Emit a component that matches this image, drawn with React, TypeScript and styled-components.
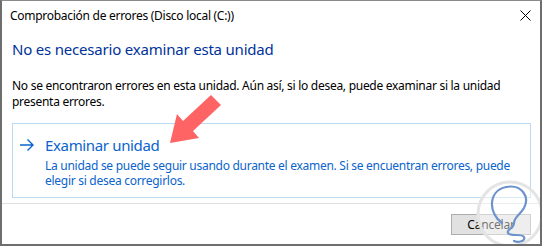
import React from "react";
import styled, { createGlobalStyle } from "styled-components";

const Global = createGlobalStyle`
  html, body { margin: 0; padding: 0; background: #fff; }
  body { font-family: "Segoe UI", "Noto Sans", "Liberation Sans", sans-serif; }
`;

const Window = styled.div`
  position: relative;
  width: 542px;
  height: 246px;
  box-sizing: border-box;
  border: 2px solid #6e6e6e;
  border-top: 1px solid #8a8a8a;
  background: #fff;
  display: flex;
  flex-direction: column;
  overflow: hidden;
`;

const TitleBar = styled.div`
  height: 29px;
  flex: none;
  display: flex;
  align-items: center;
  justify-content: space-between;
  padding: 0 8px 0 8px;
  font-size: 12px;
  letter-spacing: -0.28px;
  color: #000;
`;

const CloseBtn = styled.div`
  width: 11px;
  height: 11px;
  margin-right: 1px;
  display: flex;
`;

const Body = styled.div`
  flex: 1;
  display: flex;
  flex-direction: column;
  padding: 0 9px 0 10px;
`;

const Heading = styled.div`
  margin-top: 9px;
  font-size: 15px;
  line-height: 20px;
  letter-spacing: -0.2px;
  color: #003399;
`;

const Paragraph = styled.div`
  margin-top: 19px;
  font-size: 12px;
  line-height: 16px;
  letter-spacing: -0.28px;
  color: #000;
  width: 490px;
`;

const CommandLink = styled.div`
  margin-top: 13px;
  border: 1px solid #bcdaf2;
  padding: 11px 10px 9px 7px;
  display: grid;
  grid-template-columns: 25px 1fr;
`;

const LinkArrow = styled.div`
  display: flex;
  align-items: center;
  height: 20px;
`;

const LinkTitle = styled.div`
  font-size: 15px;
  line-height: 20px;
  letter-spacing: -0.35px;
  color: #0a64cc;
`;

const LinkDesc = styled.div`
  grid-column: 2;
  margin-top: 3px;
  font-size: 12px;
  line-height: 15px;
  letter-spacing: -0.28px;
  color: #0a64cc;
`;

const Footer = styled.div`
  margin-top: auto;
  height: 41px;
  border-top: 1px solid #dfdfdf;
  display: flex;
  justify-content: flex-end;
  align-items: flex-start;
  padding: 10px 9px 0 0;
  box-sizing: border-box;
  margin-left: -10px;
  margin-right: -9px;
`;

const Button = styled.button`
  width: 80px;
  height: 21px;
  border: 1px solid #adadad;
  background: #e1e1e1;
  font-family: inherit;
  font-size: 12px;
  letter-spacing: -0.2px;
  color: #000;
  padding: 0;
`;

const Overlay = styled.svg`
  position: absolute;
  left: 0;
  top: 0;
  pointer-events: none;
`;

export default function App() {
  return (
    <>
      <Global />
      <Window>
        <TitleBar>
          <span>Comprobación de errores (Disco local (C:))</span>
          <CloseBtn>
            <svg width="11" height="11" viewBox="0 0 11 11">
              <path d="M0.5 0.5 L10.5 10.5 M10.5 0.5 L0.5 10.5" stroke="#000" strokeWidth="1" />
            </svg>
          </CloseBtn>
        </TitleBar>
        <Body>
          <Heading>No es necesario examinar esta unidad</Heading>
          <Paragraph>
            No se encontraron errores en esta unidad. Aún así, si lo desea, puede examinar si la unidad
            presenta errores.
          </Paragraph>
          <CommandLink>
            <LinkArrow>
              <svg width="14" height="12" viewBox="0 0 14 12">
                <path d="M0 6 H13 M7.5 0.5 L13 6 L7.5 11.5" stroke="#0a64cc" strokeWidth="1.4" fill="none" />
              </svg>
            </LinkArrow>
            <LinkTitle>Examinar unidad</LinkTitle>
            <LinkDesc>
              La unidad se puede seguir usando durante el examen. Si se encuentran errores, puede
              elegir si desea corregirlos.
            </LinkDesc>
          </CommandLink>
          <Footer>
            <Button>Cancelar</Button>
          </Footer>
        </Body>
        <Overlay width="542" height="246" viewBox="0 0 542 246">
          <polygon
            points="168,142 175,113 181,120 209,94 219,104 191,130 197,137"
            fill="#ff6464"
          />
          <circle cx="508" cy="213" r="32" fill="rgba(255,255,255,0.45)" stroke="#e4e4e4" strokeWidth="3" />
          <path
            d="M500 222 C486 212 486 190 504 186 C520 183 528 196 522 207 C518 214 512 216 512 222 C512 228 504 228 506 232 C508 236 520 232 522 236 C524 240 516 242 512 240"
            stroke="#6d93cc"
            strokeWidth="2.2"
            fill="none"
            strokeLinecap="round"
          />
        </Overlay>
      </Window>
    </>
  );
}
